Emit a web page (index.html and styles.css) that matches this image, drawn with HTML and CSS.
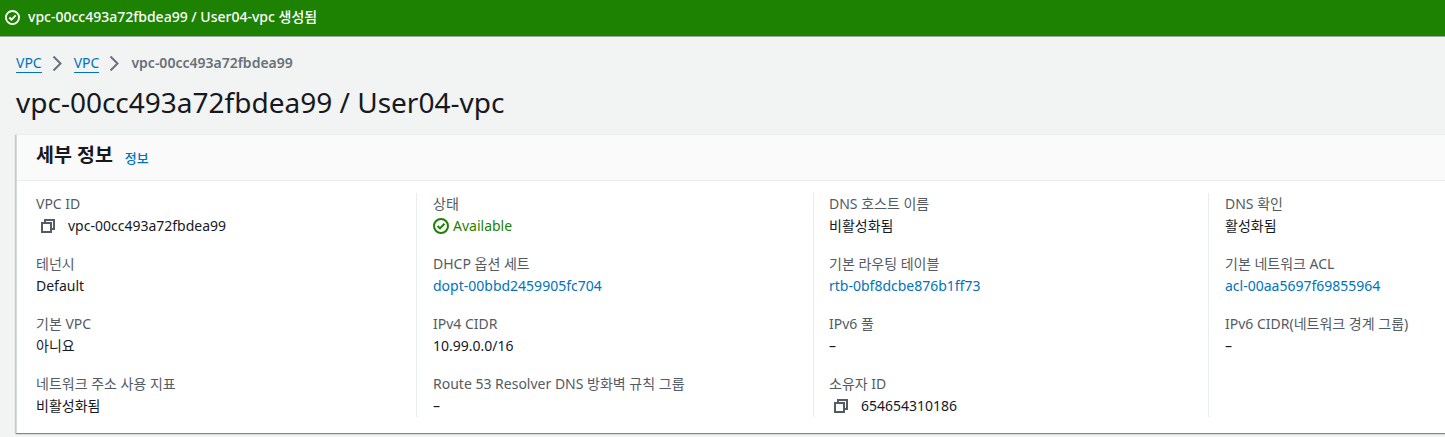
FILE: index.html
```
<!DOCTYPE html>
<html lang="ko">
<head>
<meta charset="utf-8">
<title>vpc-00cc493a72fbdea99 / User04-vpc</title>
<link rel="stylesheet" href="styles.css">
</head>
<body>
<div class="flash">
  <svg class="icon" viewBox="0 0 16 16"><circle cx="8" cy="8" r="7"/><path d="M4.6 8l2.4 2.4 4.4-4.6"/></svg>
  <span>vpc-00cc493a72fbdea99 / User04-vpc 생성됨</span>
</div>
<main class="content">
  <nav class="crumbs">
    <a href="#">VPC</a>
    <svg class="chev" viewBox="0 0 15 15"><path d="M3.5.5l7 7-7 7"/></svg>
    <a href="#">VPC</a>
    <svg class="chev" viewBox="0 0 15 15"><path d="M3.5.5l7 7-7 7"/></svg>
    <span class="current">vpc-00cc493a72fbdea99</span>
  </nav>
  <h1>vpc-00cc493a72fbdea99 / User04-vpc</h1>
  <section class="card">
    <header class="card-head">
      <h2>세부 정보</h2><a class="info" href="#">정보</a>
    </header>
    <div class="grid">
      <div class="col">
        <div class="kv"><div class="k">VPC ID</div><div class="v copy"><svg class="copy-icon" viewBox="0 0 14 14"><rect x="1" y="4" width="9" height="9"/><path d="M4 4V1h9v9h-3"/></svg>vpc-00cc493a72fbdea99</div></div>
        <div class="kv"><div class="k">테넌시</div><div class="v">Default</div></div>
        <div class="kv"><div class="k">기본 VPC</div><div class="v">아니요</div></div>
        <div class="kv"><div class="k">네트워크 주소 사용 지표</div><div class="v">비활성화됨</div></div>
      </div>
      <div class="col">
        <div class="kv"><div class="k">상태</div><div class="v ok"><svg class="ok-icon" viewBox="0 0 16 16"><circle cx="8" cy="8" r="7"/><path d="M4.6 8l2.4 2.4 4.4-4.6"/></svg>Available</div></div>
        <div class="kv"><div class="k">DHCP 옵션 세트</div><div class="v"><a href="#">dopt-00bbd2459905fc704</a></div></div>
        <div class="kv"><div class="k">IPv4 CIDR</div><div class="v">10.99.0.0/16</div></div>
        <div class="kv"><div class="k">Route 53 Resolver DNS 방화벽 규칙 그룹</div><div class="v">–</div></div>
      </div>
      <div class="col">
        <div class="kv"><div class="k">DNS 호스트 이름</div><div class="v">비활성화됨</div></div>
        <div class="kv"><div class="k">기본 라우팅 테이블</div><div class="v"><a href="#">rtb-0bf8dcbe876b1ff73</a></div></div>
        <div class="kv"><div class="k">IPv6 풀</div><div class="v">–</div></div>
        <div class="kv"><div class="k">소유자 ID</div><div class="v copy"><svg class="copy-icon" viewBox="0 0 14 14"><rect x="1" y="4" width="9" height="9"/><path d="M4 4V1h9v9h-3"/></svg>654654310186</div></div>
      </div>
      <div class="col">
        <div class="kv"><div class="k">DNS 확인</div><div class="v">활성화됨</div></div>
        <div class="kv"><div class="k">기본 네트워크 ACL</div><div class="v"><a href="#">acl-00aa5697f69855964</a></div></div>
        <div class="kv"><div class="k">IPv6 CIDR(네트워크 경계 그룹)</div><div class="v">–</div></div>
      </div>
    </div>
  </section>
</main>
</body>
</html>
```
FILE: styles.css
```
* { box-sizing: border-box; }
html, body { margin: 0; height: 437px; overflow: hidden; }
body {
  width: 1445px;
  background: #f2f3f3;
  color: #16191f;
  font-family: "Noto Sans", "Noto Sans CJK KR", sans-serif;
  font-size: 14px;
  line-height: 20px;
}
a { color: #0073bb; text-decoration: none; }
.flash {
  height: 37px;
  padding: 7px 0 0 5px;
  display: flex;
  gap: 8px;
  align-items: flex-start;
  background: #1d8102;
  border-bottom: 1px solid #9aa5a0;
  color: #fff;
  font-weight: 500;
}
.flash .icon { width: 15px; height: 15px; margin-top: 3px; }
.flash .icon circle, .flash .icon path { fill: none; stroke: #fff; stroke-width: 2; }
.content { padding: 16px 0 0 16px; }
.crumbs { display: flex; align-items: center; height: 20px; }
.crumbs a { border-bottom: 1px solid #0073bb; line-height: 19px; }
.chev { width: 15px; height: 15px; margin: 0 9px 0 8px; flex: none; }
.chev path { fill: none; stroke: #687078; stroke-width: 2; }
.current { color: #687078; font-weight: 600; }
h1 {
  margin: 10px 0 0;
  font-size: 28px;
  line-height: 38px;
  font-weight: 400;
}
.card {
  width: 1500px;
  height: 299px;
  margin-top: 13px;
  background: #fff;
  border-top: 1px solid #eaeded;
  border-left: 1px solid #d5dbdb;
  box-shadow: 0 1px 1px 0 rgba(0,28,36,.3), 1px 1px 1px 0 rgba(0,28,36,.15), -1px 1px 1px 0 rgba(0,28,36,.15);
}
.card-head {
  height: 46px;
  padding: 9px 19px 0;
  display: flex;
  align-items: flex-start;
  background: #fafafa;
  border-bottom: 1px solid #eaeded;
}
h2 { margin: 0; font-size: 19.5px; line-height: 22px; font-weight: 700; }
.info { margin: 3px 0 0 12px; font-size: 13px; line-height: 22px; font-weight: 500; }
.grid {
  display: grid;
  grid-template-columns: 399px 397px 395px 300px;
  padding: 12px 0 0 0;
}
.col {
  padding: 0 0 0 19px;
  height: 224px;
  display: flex;
  flex-direction: column;
  gap: 17px;
  border-left: 1px solid #eaeded;
}
.col:first-child { border-left: 0; }
.col + .col { padding-left: 16px; }
.col:nth-child(3) { padding-left: 15px; }
.k { color: #545b64; padding-top: 1px; }
.v { color: #16191f; margin-top: 2px; }
.copy { display: flex; align-items: center; padding-left: 5px; }
.copy-icon { width: 14px; height: 14px; margin-right: 13px; flex: none; }
.copy-icon rect, .copy-icon path { fill: none; stroke: #545b64; stroke-width: 2; }
.ok { color: #1d8102; display: flex; align-items: center; gap: 4px; }
.ok-icon { width: 16px; height: 16px; flex: none; }
.ok-icon circle, .ok-icon path { fill: none; stroke: #1d8102; stroke-width: 2; }
```
